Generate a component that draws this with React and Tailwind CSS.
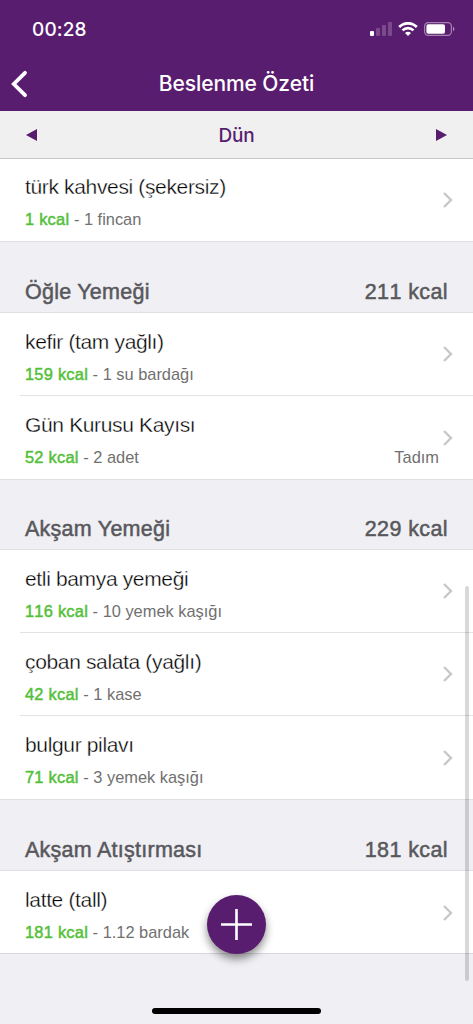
import React from 'react';

const sections = [
  {
    title: 'Öğle Yemeği',
    total: '211 kcal',
    headerHeight: 'h-[72px]',
    items: [
      { name: 'kefir (tam yağlı)', kcal: '159 kcal', amount: '1 su bardağı' },
      { name: 'Gün Kurusu Kayısı', kcal: '52 kcal', amount: '2 adet', brand: 'Tadım' },
    ],
  },
  {
    title: 'Akşam Yemeği',
    total: '229 kcal',
    headerHeight: 'h-[71px]',
    items: [
      { name: 'etli bamya yemeği', kcal: '116 kcal', amount: '10 yemek kaşığı' },
      { name: 'çoban salata (yağlı)', kcal: '42 kcal', amount: '1 kase' },
      { name: 'bulgur pilavı', kcal: '71 kcal', amount: '3 yemek kaşığı' },
    ],
  },
  {
    title: 'Akşam Atıştırması',
    total: '181 kcal',
    headerHeight: 'h-[72px]',
    items: [{ name: 'latte (tall)', kcal: '181 kcal', amount: '1.12 bardak' }],
  },
];

const StatusBar = () => (
  <div className="flex h-14 items-center justify-between pl-8 pr-[18px] pt-[2px]">
    <span className="pt-[2px] text-[19px] font-medium leading-6 tracking-[0.15px]">00:28</span>
    <div className="flex items-center">
      {/* Signal */}
      <svg width="22" height="14" viewBox="0 0 22 14" fill="#fff">
        <rect x="0" y="9" width="4" height="5" rx="1" />
        <rect x="6" y="6" width="4" height="8" rx="1" opacity="0.2" />
        <rect x="12" y="3" width="4" height="11" rx="1" opacity="0.2" />
        <rect x="18" y="0" width="4" height="14" rx="1" opacity="0.2" />
      </svg>
      {/* Wifi */}
      <svg className="ml-[6px]" width="20" height="14" viewBox="0 0 20 14" fill="none" stroke="#fff" strokeWidth="2.7">
        <path d="M1.2 5C6.1 0.1 13.9 0.1 18.8 5" />
        <path d="M4.5 8.4C7.6 5.4 12.4 5.4 15.5 8.4" />
        <path d="M10 14L7 11C8.7 9.4 11.3 9.4 13 11Z" fill="#fff" stroke="none" />
      </svg>
      {/* Battery */}
      <svg className="ml-[6px]" width="31" height="14" viewBox="0 0 31 14">
        <rect x="0.6" y="0.6" width="26.8" height="12.8" rx="3.6" fill="none" stroke="#fff" strokeOpacity="0.45" strokeWidth="1.2" />
        <rect x="2.4" y="2.2" width="18.6" height="9.6" rx="1.8" fill="#fff" />
        <path d="M29 4.8C30.8 5.4 30.8 8.6 29 9.2Z" fill="#fff" fillOpacity="0.5" />
      </svg>
    </div>
  </div>
);

const Header = () => (
  <header className="h-[111px] bg-[#591d6f] font-['Inter',sans-serif] text-white">
    <StatusBar />
    <div className="grid h-[55px] grid-cols-[48px_1fr_48px] items-center">
      <button className="pl-[11px]" aria-label="Geri">
        <svg width="17" height="28" viewBox="0 0 17 28" fill="none" stroke="#fff" strokeWidth="3.8" strokeLinecap="round" strokeLinejoin="miter">
          <path d="M14 2.8L2.8 14L14 25.2" />
        </svg>
      </button>
      <h1 className="text-center text-[21px] font-medium leading-7 tracking-[-0.08px]">Beslenme Özeti</h1>
    </div>
  </header>
);

const DayPicker = () => (
  <div className="relative z-10 flex h-12 items-center justify-between border-b border-[#c8c7cc] bg-[#f0f0f1] px-[26px] text-[#591d6f]">
    <svg width="11" height="12" viewBox="0 0 11 12" fill="currentColor">
      <path d="M11 0V12L0 6Z" />
    </svg>
    <span className="pt-[2px] font-['Inter',sans-serif] text-[19px] font-medium leading-6 tracking-[-0.2px]">Dün</span>
    <svg width="11" height="12" viewBox="0 0 11 12" fill="currentColor">
      <path d="M0 0V12L11 6Z" />
    </svg>
  </div>
);

const FoodRow = ({ name, kcal, amount, brand, divider }) => (
  <div className="h-[83px] bg-white pl-5">
    <div className={`flex h-full items-center pl-[5px] pr-5 ${divider ? 'border-b border-[#e2e2e4]' : ''}`}>
      <div className="flex-1 pt-[3px]">
        <div className="text-[21px] leading-7 tracking-[-0.35px] text-black [-webkit-text-stroke:0.35px_white]">{name}</div>
        <div className="mt-2 flex justify-between pr-1 text-[16.4px] leading-5 text-[#707070]">
          <span>
            <span className="tracking-[0.25px] text-[#55bf3b] [-webkit-text-stroke:0.5px_#55bf3b] [font-kerning:none]">{kcal}</span> - {amount}
          </span>
          {brand && <span>{brand}</span>}
        </div>
      </div>
      <svg width="10" height="16" viewBox="0 0 10 16" fill="none" stroke="#c7c7cc" strokeWidth="2.4">
        <path d="M1 1L8 8L1 15" />
      </svg>
    </div>
  </div>
);

const Section = ({ title, total, headerHeight, items }) => (
  <section>
    <div
      className={`flex items-end justify-between border-y border-[#e0e0e4] px-[25px] pb-[6px] text-[21.5px] leading-7 text-[#58585c] [-webkit-text-stroke:0.5px_#58585c] ${headerHeight}`}
    >
      <h2 className="tracking-[0.25px]">{title}</h2>
      <span className="tracking-[0.4px] [font-kerning:none]">{total}</span>
    </div>
    {items.map((item, i) => (
      <FoodRow key={item.name} {...item} divider={i < items.length - 1} />
    ))}
  </section>
);

export default function App() {
  return (
    <div className="relative h-[1024px] w-[473px] overflow-hidden bg-[#efeff4] font-['Liberation_Sans',Arial,sans-serif]">
      <Header />
      <DayPicker />
      <main className="-mt-px">
        <FoodRow name="türk kahvesi (şekersiz)" kcal="1 kcal" amount="1 fincan" />
        {sections.map((section) => (
          <Section key={section.title} {...section} />
        ))}
        <div className="-mt-px border-t border-[#d8d8dc]" />
      </main>

      {/* Scroll indicator */}
      <div className="absolute right-[4px] top-[586px] h-[395px] w-1 rounded-full bg-black/15" />

      {/* Add button */}
      <button
        className="absolute left-[207px] top-[895px] flex size-[59px] items-center justify-center rounded-full bg-[#591d6f] shadow-[0_5px_9px_rgba(0,0,0,0.45)]"
        aria-label="Ekle"
      >
        <svg width="31" height="31" viewBox="0 0 31 31" stroke="#fff" strokeWidth="2.6">
          <path d="M15.5 0V31M0 15.5H31" />
        </svg>
      </button>

      {/* Home indicator */}
      <div className="absolute left-[152px] top-[1008px] h-[6px] w-[169px] rounded-full bg-black" />
    </div>
  );
}
